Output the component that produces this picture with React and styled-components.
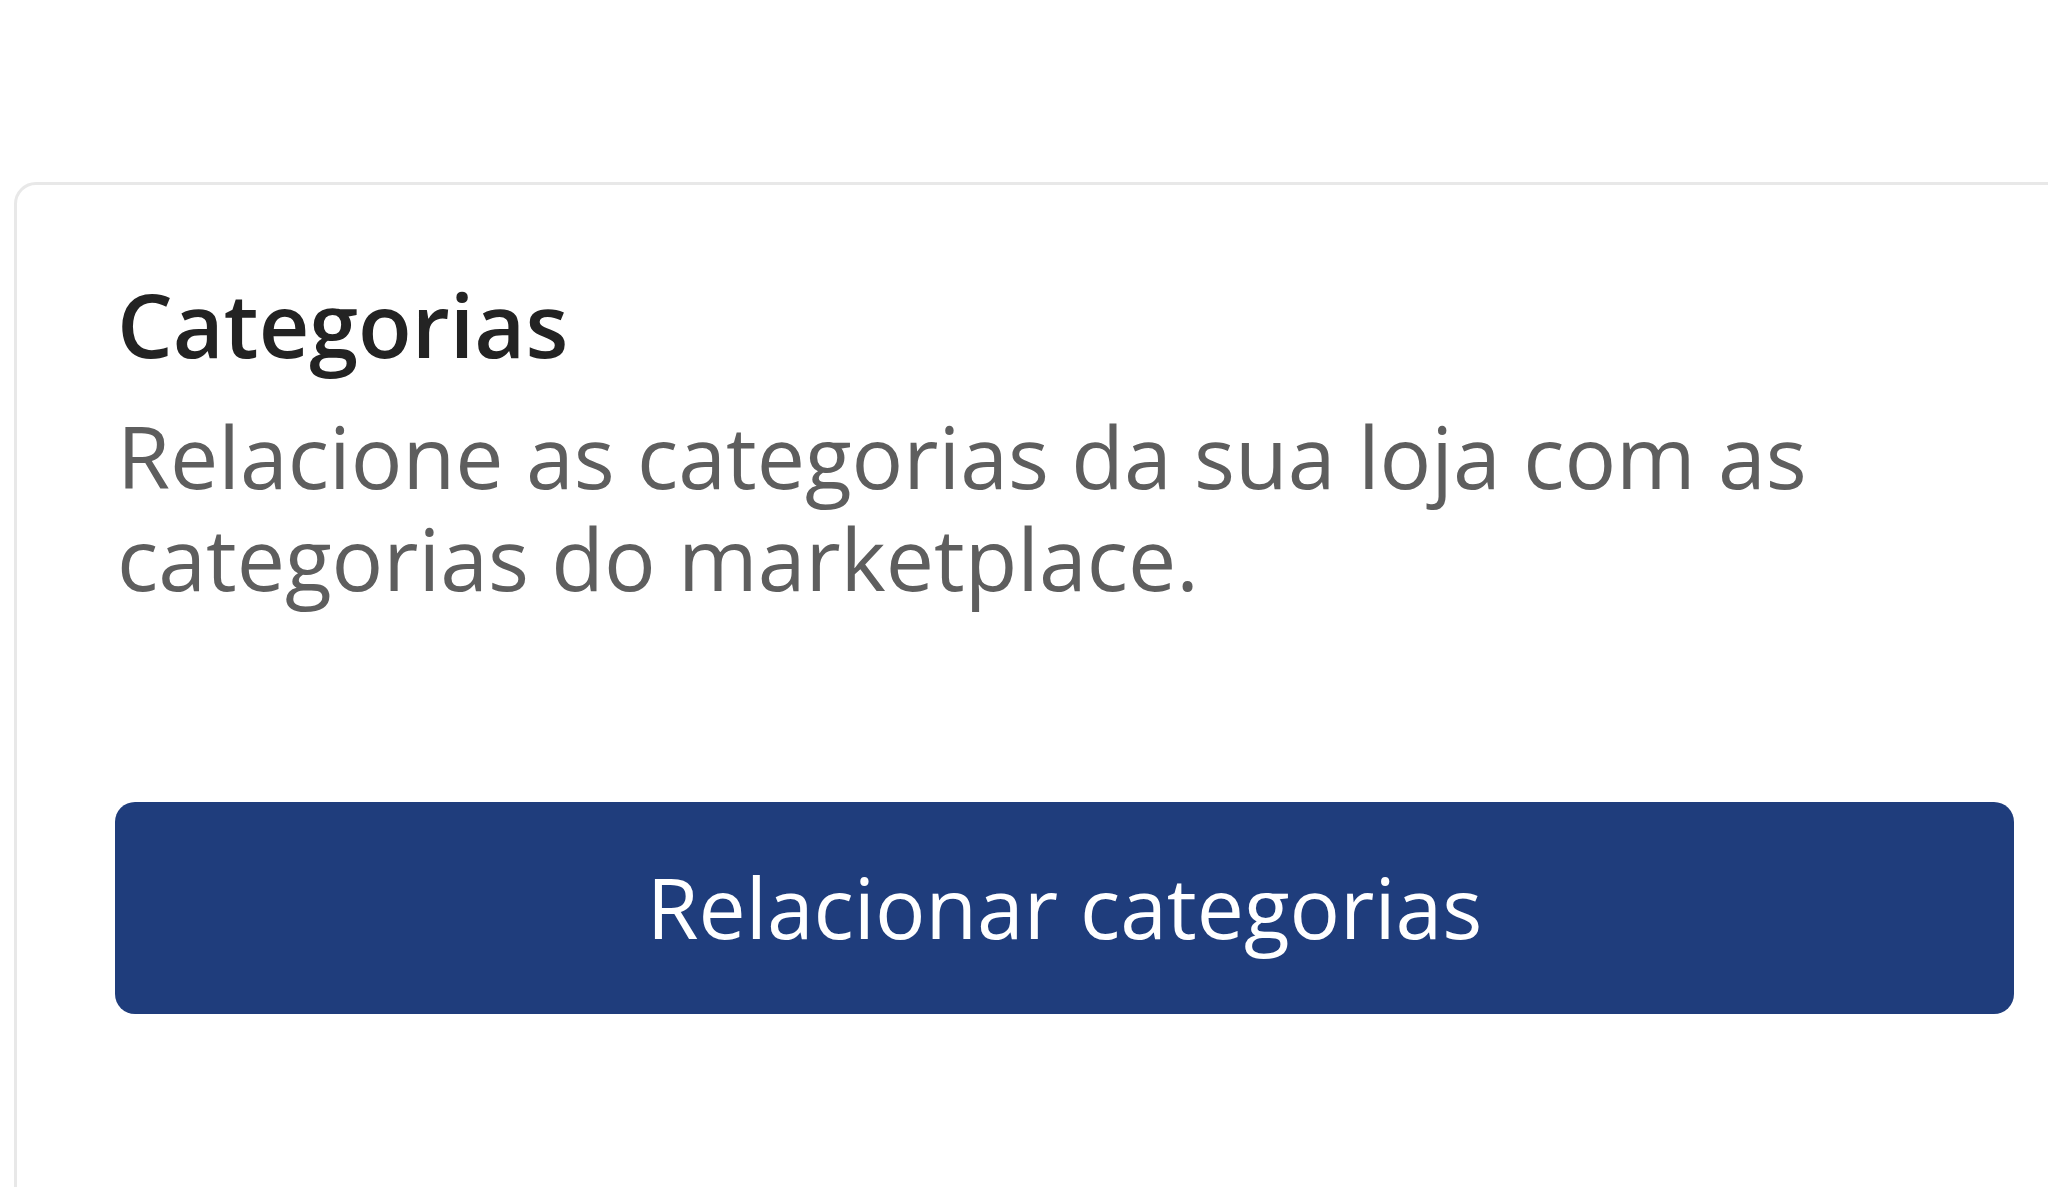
import React from "react";
import styled, { createGlobalStyle } from "styled-components";

const Global = createGlobalStyle`
  html, body {
    margin: 0;
    padding: 0;
    background: #ffffff;
    overflow: hidden;
  }
  body {
    font-family: "Open Sans", "Noto Sans", Arial, sans-serif;
  }
`;

const Page = styled.div`
  width: 2048px;
  height: 1187px;
  padding: 182px 0 0 14px;
  box-sizing: border-box;
  overflow: hidden;
`;

const Card = styled.section`
  width: 2108px;
  min-height: 1100px;
  box-sizing: border-box;
  border: 3px solid #e8e8e8;
  border-radius: 22px;
  background: #ffffff;
  padding: 85px 105px 0 98px;
  display: flex;
  flex-direction: column;
`;

const Title = styled.h2`
  margin: 0;
  padding-left: 2px;
  font-size: 88px;
  line-height: 1.24;
  font-weight: 600;
  color: #232323;
`;

const Description = styled.p`
  margin: 26px 0 0;
  padding-left: 2px;
  font-size: 86px;
  line-height: 1.19;
  font-weight: 400;
  color: #5e5e5e;
  max-width: 1780px;
`;

const Button = styled.button`
  margin-top: 192px;
  height: 212px;
  width: 100%;
  border: none;
  border-radius: 20px;
  background: #1f3d7c;
  color: #ffffff;
  font-family: "Open Sans", "Noto Sans", Arial, sans-serif;
  font-size: 84px;
  line-height: 1.2;
  font-weight: 500;
  display: flex;
  align-items: center;
  justify-content: center;
  cursor: pointer;
`;

export default function App() {
  return (
    <>
      <Global />
      <Page>
        <Card>
          <Title>Categorias</Title>
          <Description>
            Relacione as categorias da sua loja com as categorias do marketplace.
          </Description>
          <Button>Relacionar categorias</Button>
        </Card>
      </Page>
    </>
  );
}
